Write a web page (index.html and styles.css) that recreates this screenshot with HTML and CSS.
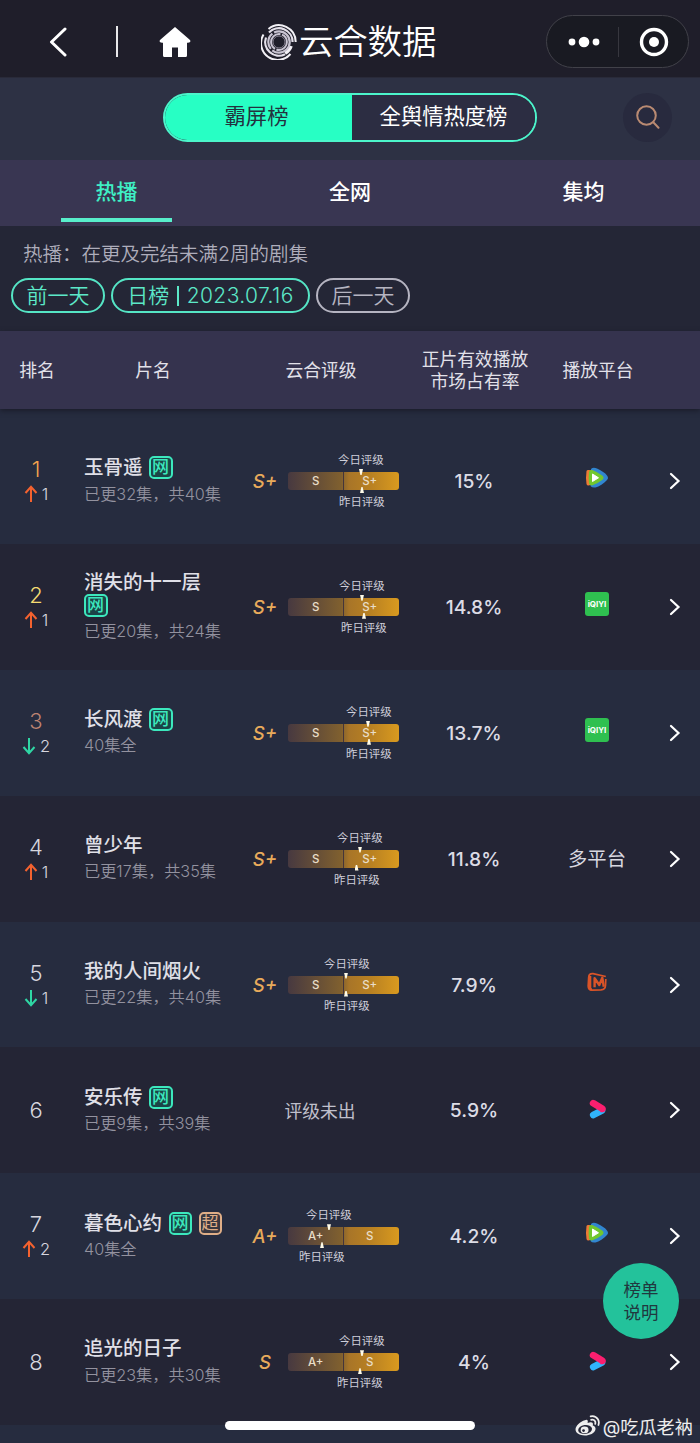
FILE: index.html
```html
<!DOCTYPE html>
<html lang="zh-CN">
<head>
<meta charset="utf-8">
<title>云合数据</title>
<link rel="stylesheet" href="styles.css">
</head>
<body>
<svg class="sprite" aria-hidden="true">
  <symbol id="up" viewBox="0 0 14 18"><path d="M7 17V2M1.500 8L7 1.800L12.500 8" fill="none" stroke="#f4622f" stroke-width="2"/></symbol>
  <symbol id="down" viewBox="0 0 14 18"><path d="M7 1v15M1.500 10L7 16.200L12.500 10" fill="none" stroke="#2fd6a4" stroke-width="2"/></symbol>
  <symbol id="chevron" viewBox="0 0 12 18"><path d="M2 2l7.500 7L2 16" fill="none" stroke="#fff" stroke-width="2.200" stroke-linecap="round"/></symbol>
  <symbol id="tencent" viewBox="0 0 24 22">
    <path d="M6 2C8 .2 10 .8 12 1.600C17 4 20 6 22 8.500Q24 11 22 13C19 16.500 14 19.500 10.500 20.500Q7 21 5.500 19Z" fill="#3186d0"/>
    <path d="M1.500 4Q2 2.500 4 3L9 4V17L3.500 18.500Q1.800 18.500 1.500 17Q.5 11 1.500 4Z" fill="#ef7a35"/>
    <path d="M4 5Q4.500 2.500 7 3Q13 5 17.500 8.800Q19.500 11 17.500 12.700Q12 17 7 18.500Q4.500 18.500 4 16.500Q3.200 11 4 5Z" fill="#72c72e"/>
    <path d="M7.500 7L13.500 10.800L7.500 14.500Z" fill="#fff" stroke="#fff" stroke-linejoin="round"/>
  </symbol>
  <symbol id="mango" viewBox="0 0 20 20">
    <path d="M18.800 4.500L6 1.600Q2 1.300 1.700 5L1.200 14Q1.200 18.200 5 18.200L14 17.800Q18.300 17.500 18.500 13.500L18.800 7" fill="none" stroke="#d95428" stroke-width="1.700"/>
    <path d="M3 4V16Q3 17.500 5 17.500" fill="none" stroke="#d95428" stroke-width="2.600"/>
    <path d="M7.600 15.200V6.200L12.300 13L15.300 5.800L16.800 14.800" fill="none" stroke="#d95428" stroke-width="2.400" stroke-linejoin="round"/>
  </symbol>
  <symbol id="youku" viewBox="0 0 18 20">
    <path d="M4.200 16L13 11.500" stroke="#31b4fb" stroke-width="6.600" stroke-linecap="round"/>
    <path d="M4.200 4.200L13.200 9.700" stroke="#fb1f6f" stroke-width="6.800" stroke-linecap="round"/>
    <path d="M11 13Q16.800 14 16.600 9.500L13 9Z" fill="#fb1f6f"/>
  </symbol>
</svg>

<div class="screen">
  <header class="nav">
    <svg class="nav-back" viewBox="0 0 18 30"><path d="M16 2L2.500 15L16 28" fill="none" stroke="#fff" stroke-width="3" stroke-linecap="round" stroke-linejoin="round"/></svg>
    <span class="nav-line"></span>
    <svg class="nav-home" viewBox="0 0 32 30"><path d="M16 0L31 13Q32.500 15.500 29 15.800H28V28.500Q28 30 26.500 30H19V20.500H13V30H5.500Q4 30 4 28.500V15.800H3Q-.5 15.500 1 13Z" fill="#fff"/></svg>
    <div class="brand">
      <svg class="brand-logo" viewBox="0 0 36 36" fill="none">
        <g stroke="#f3f1f6" stroke-width="2">
          <path d="M7.500 5A16.700 16.700 0 0 1 34.700 18"/>
          <path d="M2.500 10.500A16.700 16.700 0 0 0 29.500 30"/>
        </g>
        <path d="M8 8.600A13.600 13.600 0 0 1 31.600 18" stroke="#e4e0ea" stroke-width="2.200"/>
        <path d="M5 13.500A13.700 13.700 0 0 0 24 30.300" stroke="#e4e0ea" stroke-width="2.200"/>
        <path d="M30 22A12.600 12.600 0 0 1 24 29.200" stroke="#f3f1f6" stroke-width="3.600"/>
        <g stroke="#c9c4d2">
          <circle cx="18" cy="18" r="10.700" stroke-width="2.200" stroke-dasharray="24 2 17 2"/>
          <circle cx="18" cy="18" r="7.900" stroke-width="2" stroke-dasharray="15 1.500 22 1.500"/>
        </g>
        <circle cx="18" cy="18" r="6" stroke="#85808f" stroke-width="1"/>
      </svg>
      <span>云合数据</span>
    </div>
    <div class="capsule">
      <svg class="dots" viewBox="0 0 32 12" fill="#fff"><circle cx="4" cy="6" r="3.400"/><circle cx="16" cy="6" r="5.300"/><circle cx="28" cy="6" r="3.400"/></svg>
      <span class="capsule-line"></span>
      <svg class="target" viewBox="0 0 30 30"><circle cx="15" cy="15" r="12.500" fill="none" stroke="#fff" stroke-width="3.400"/><circle cx="15" cy="15" r="5" fill="#fff"/></svg>
    </div>
  </header>

  <div class="switch-bar">
    <div class="switch"><span class="switch-on">霸屏榜</span><span class="switch-off">全舆情热度榜</span></div>
    <div class="search"><svg viewBox="0 0 24 24" fill="none" stroke="#b98a72" stroke-width="2" stroke-linecap="round"><circle cx="10.500" cy="10.500" r="9.300"/><path d="M17.300 17.300L22.500 22.700"/></svg></div>
  </div>

  <nav class="tabs"><span class="tab tab-on">热播</span><span class="tab">全网</span><span class="tab">集均</span></nav>

  <section class="filters">
    <p class="note">热播：在更及完结未满2周的剧集</p>
    <div class="pills">
      <span class="pill pill-day">前一天</span>
      <span class="pill pill-date">日榜<i class="pill-sep"></i><span class="date">2023.07.16</span></span>
      <span class="pill pill-day pill-off">后一天</span>
    </div>
  </section>

  <div class="cols head"><span>排名</span><span>片名</span><span>云合评级</span><span>正片有效播放<br>市场占有率</span><span>播放平台</span></div>

  <main class="list">
    <article class="cols row">
      <div class="rank"><b class="r1">1</b><span class="move"><svg><use href="#up"/></svg>1</span></div>
      <div class="name"><div class="title">玉骨遥<i class="tag">网</i></div><div class="sub">已更32集，共40集</div></div>
      <div class="rating"><em>S+</em><div class="scale"><span class="mark-label" style="margin-left:50px">今日评级</span><div class="bar"><span>S</span><span>S+</span><i class="pin pin-top" style="left:73px"></i><i class="pin pin-bottom" style="left:74px"></i></div><span class="mark-label" style="margin-left:51px">昨日评级</span></div></div>
      <div class="share">15%</div>
      <div class="platform"><svg class="p-tencent"><use href="#tencent"/></svg></div>
      <svg class="go"><use href="#chevron"/></svg>
    </article>
    <article class="cols row">
      <div class="rank"><b class="r2">2</b><span class="move"><svg><use href="#up"/></svg>1</span></div>
      <div class="name"><div class="title">消失的十一层<i class="tag">网</i></div><div class="sub">已更20集，共24集</div></div>
      <div class="rating"><em>S+</em><div class="scale"><span class="mark-label" style="margin-left:51px">今日评级</span><div class="bar"><span>S</span><span>S+</span><i class="pin pin-top" style="left:74px"></i><i class="pin pin-bottom" style="left:76px"></i></div><span class="mark-label" style="margin-left:53px">昨日评级</span></div></div>
      <div class="share">14.8%</div>
      <div class="platform"><span class="p-iqiyi">iQIYI</span></div>
      <svg class="go"><use href="#chevron"/></svg>
    </article>
    <article class="cols row">
      <div class="rank"><b class="r3">3</b><span class="move"><svg><use href="#down"/></svg>2</span></div>
      <div class="name"><div class="title">长风渡<i class="tag">网</i></div><div class="sub">40集全</div></div>
      <div class="rating"><em>S+</em><div class="scale"><span class="mark-label" style="margin-left:58px">今日评级</span><div class="bar"><span>S</span><span>S+</span><i class="pin pin-top" style="left:80px"></i><i class="pin pin-bottom" style="left:81px"></i></div><span class="mark-label" style="margin-left:58px">昨日评级</span></div></div>
      <div class="share">13.7%</div>
      <div class="platform"><span class="p-iqiyi">iQIYI</span></div>
      <svg class="go"><use href="#chevron"/></svg>
    </article>
    <article class="cols row">
      <div class="rank"><b>4</b><span class="move"><svg><use href="#up"/></svg>1</span></div>
      <div class="name"><div class="title">曾少年</div><div class="sub">已更17集，共35集</div></div>
      <div class="rating"><em>S+</em><div class="scale"><span class="mark-label" style="margin-left:49px">今日评级</span><div class="bar"><span>S</span><span>S+</span><i class="pin pin-top" style="left:72px"></i><i class="pin pin-bottom" style="left:68.500px"></i></div><span class="mark-label" style="margin-left:46px">昨日评级</span></div></div>
      <div class="share">11.8%</div>
      <div class="platform">多平台</div>
      <svg class="go"><use href="#chevron"/></svg>
    </article>
    <article class="cols row">
      <div class="rank"><b>5</b><span class="move"><svg><use href="#down"/></svg>1</span></div>
      <div class="name"><div class="title">我的人间烟火</div><div class="sub">已更22集，共40集</div></div>
      <div class="rating"><em>S+</em><div class="scale"><span class="mark-label" style="margin-left:36px">今日评级</span><div class="bar"><span>S</span><span>S+</span><i class="pin pin-top" style="left:58px"></i><i class="pin pin-bottom" style="left:58px"></i></div><span class="mark-label" style="margin-left:36px">昨日评级</span></div></div>
      <div class="share">7.9%</div>
      <div class="platform"><svg class="p-mango"><use href="#mango"/></svg></div>
      <svg class="go"><use href="#chevron"/></svg>
    </article>
    <article class="cols row">
      <div class="rank"><b>6</b></div>
      <div class="name"><div class="title">安乐传<i class="tag">网</i></div><div class="sub">已更9集，共39集</div></div>
      <div class="pending">评级未出</div>
      <div class="share">5.9%</div>
      <div class="platform"><svg class="p-youku"><use href="#youku"/></svg></div>
      <svg class="go"><use href="#chevron"/></svg>
    </article>
    <article class="cols row">
      <div class="rank"><b>7</b><span class="move"><svg><use href="#up"/></svg>2</span></div>
      <div class="name"><div class="title">暮色心约<i class="tag">网</i><i class="tag tag-super">超</i></div><div class="sub">40集全</div></div>
      <div class="rating"><em>A+</em><div class="scale"><span class="mark-label" style="margin-left:18px">今日评级</span><div class="bar"><span>A+</span><span>S</span><i class="pin pin-top" style="left:41px"></i><i class="pin pin-bottom" style="left:34px"></i></div><span class="mark-label" style="margin-left:11px">昨日评级</span></div></div>
      <div class="share">4.2%</div>
      <div class="platform"><svg class="p-tencent"><use href="#tencent"/></svg></div>
      <svg class="go"><use href="#chevron"/></svg>
    </article>
    <article class="cols row">
      <div class="rank"><b>8</b></div>
      <div class="name"><div class="title">追光的日子</div><div class="sub">已更23集，共30集</div></div>
      <div class="rating"><em>S</em><div class="scale"><span class="mark-label" style="margin-left:51px">今日评级</span><div class="bar"><span>A+</span><span>S</span><i class="pin pin-top" style="left:74px"></i><i class="pin pin-bottom" style="left:72px"></i></div><span class="mark-label" style="margin-left:49px">昨日评级</span></div></div>
      <div class="share">4%</div>
      <div class="platform"><svg class="p-youku"><use href="#youku"/></svg></div>
      <svg class="go"><use href="#chevron"/></svg>
    </article>
  </main>

  <div class="float-btn">榜单<br>说明</div>
  <div class="home-bar"></div>
  <div class="credit">
    <svg viewBox="0 0 24 20" fill="none">
      <path d="M9.500 5Q12 3.800 12.300 6Q12.300 7 12 7.600Q16 6 17 7.700Q17.500 9 17 10Q20 11 19.700 13.500C19 17.500 14 19.500 9.500 19.500C4.500 19.500.5 17.200.5 13.800C.5 10.500 5 6 9.500 5Z" fill="#eee"/>
      <ellipse cx="9.700" cy="13.800" rx="6.700" ry="4.300" fill="#242637" transform="rotate(-8 9.700 13.800)"/>
      <ellipse cx="9.200" cy="14.200" rx="3.800" ry="3.300" fill="#eee"/><circle cx="8.200" cy="14.900" r="1.300" fill="#242637"/>
      <path d="M15 1.200Q19.500.2 22 4Q23.500 6.500 22.500 9.500M15.500 4.600Q18 4 19.300 6Q19.800 7.200 19.400 8.500" stroke="#eee" stroke-width="1.700" stroke-linecap="round"/>
    </svg>
    <span>@吃瓜老衲</span>
  </div>
</div>
</body>
</html>
```
FILE: styles.css
```css
* { box-sizing: border-box; }
body {
  margin: 0;
  background: #262c3f;
  color: #fff;
  font-family: Inter, "Noto Sans CJK SC", sans-serif;
}
i, em, b { font-style: normal; font-weight: inherit; }
.sprite { position: absolute; width: 0; height: 0; }
.screen { position: relative; width: 700px; height: 1443px; overflow: hidden; background: #262c3f; }

/* Navigation */
.nav { display: flex; align-items: center; height: 78px; padding: 6px 11px 0 49px; background: #1f1e2a; border-bottom: 1px solid #292a39; }
.nav-back { width: 18px; height: 30px; }
.nav-line { width: 1.500px; height: 31px; margin-left: 49px; background: #e8e8ea; }
.nav-home { width: 32px; height: 30px; margin-left: 41.500px; }
.brand { display: flex; align-items: center; gap: 2px; margin-left: 70px; font-size: 34.500px; font-weight: 350; line-height: 44px; letter-spacing: -.2px; }
.brand-logo { width: 36px; height: 36px; }
.capsule { display: flex; align-items: center; width: 143px; height: 53px; margin-left: auto; padding-left: 21px; border: 1px solid #414149; border-radius: 27px; background: #191a22; }
.dots { width: 32px; height: 12px; }
.capsule-line { width: 1px; height: 30px; margin-left: 18px; background: #37373f; }
.target { width: 30px; height: 30px; margin-left: 20px; }

/* Board switch */
.switch-bar { display: flex; align-items: center; height: 82px; padding: 0 28px 4px 163px; background: #2d3144; }
.switch { display: flex; width: 374px; height: 49px; border: 2px solid #4cf5cb; border-radius: 25px; overflow: hidden; font-size: 21.300px; line-height: 42px; text-align: center; }
.switch-on { width: 187px; padding-right: 4px; background: #27ffc4; color: #23323f; }
.switch-off { flex: 1; background: #2c2d42; }
.search { display: flex; align-items: center; justify-content: center; width: 49px; height: 49px; margin-left: auto; border-radius: 50%; background: #282a3e; }
.search svg { width: 24px; height: 24px; }

/* Tabs */
.tabs { display: flex; justify-content: space-between; height: 66px; padding: 0 61px; background: #393652; }
.tab { width: 111px; height: 62px; font-size: 21px; font-weight: 500; line-height: 64px; text-align: center; }
.tab-on { border-bottom: 4px solid #58eecb; color: #3ff0c5; }

/* Date filter */
.filters { height: 105px; padding: 14px 11px 0; background: #242636; }
.note { height: 28px; margin: 0 0 10px 12px; color: #aeadbb; font-size: 19.500px; font-weight: 350; line-height: 28px; }
.pills { display: flex; gap: 6px; }
.pill { display: flex; align-items: center; justify-content: center; height: 35px; border: 2px solid #55e5c5; border-radius: 18px; color: #5ce8c8; font-size: 21px; font-weight: 350; line-height: 30px; }
.pill-day { width: 94px; }
.pill-date { width: 199px; }
.pill-sep { width: 1.500px; height: 20px; margin: 0 8px; background: currentColor; }
.date { letter-spacing: .4px; }
.pill-off { border-color: #b5b4c1; color: #b5b4c1; }

/* Ranking table */
.cols { display: grid; grid-template-columns: 72px 160px 176px 132px 114px 42px; align-items: center; }
.head { position: relative; height: 78px; padding: 1px 0 0 1px; background: #35334e; box-shadow: 0 2px 5px #1b1d2b; color: #e2e1e9; font-size: 17.800px; line-height: 21.500px; text-align: center; }
.list { padding-top: 9px; }
.row { height: 125.900px; background: #262c3f; }
.row:nth-child(even) { background: #242535; }
.rank { display: flex; flex-direction: column; align-items: center; color: #d7d7df; }
.rank b { font-size: 22px; font-weight: 350; line-height: 26px; }
.rank .r1 { color: #f3a24d; }
.rank .r2 { color: #f5dc72; }
.rank .r3 { color: #bd8371; }
.move { display: flex; align-items: center; gap: 4px; height: 24px; font-size: 16.500px; font-weight: 350; }
.move svg { width: 14px; height: 18px; }
.name { width: 152px; padding-left: 12px; }
.title { display: flex; flex-wrap: wrap; align-items: center; column-gap: 6.500px; margin-bottom: 2px; color: #e0e0e8; font-size: 19.500px; font-weight: 500; line-height: 23.500px; }
.tag { width: 23.500px; height: 23px; border: 2px solid #3ce8bd; border-radius: 5px; background: #1b4448; color: #3ce8bd; font-size: 17px; font-weight: 500; line-height: 18px; text-align: center; text-indent: -.5px; }
.tag-super { border-color: #dfae87; background: #3a3840; color: #dfae87; font-weight: 400; }
.sub { color: #93929f; font-size: 16.200px; font-weight: 350; line-height: 24px; white-space: nowrap; }
.rating { display: flex; align-items: center; padding-left: 13px; }
.rating em { width: 40px; margin-right: 3px; color: #e9ab5b; font-size: 18.500px; font-style: italic; font-weight: 500; text-align: center; }
.scale { width: 111px; }
.mark-label { display: block; width: 46px; color: #cfcfda; font-size: 11.400px; line-height: 24px; white-space: nowrap; }
.bar { position: relative; display: grid; grid-template-columns: 1fr 1fr; height: 18px; border-radius: 3px; background: linear-gradient(90deg, #473940, #80602f 48%, #a87528 55%, #b98122 75%, #d99a1f); color: #e9ddc8; font-size: 11.500px; font-weight: 500; line-height: 18px; text-align: center; }
.bar span { padding-left: 1px; }
.bar span:nth-child(2) { padding: 0 3px 0 0; }
.bar span:first-child { border-right: 1px solid #44353a; }
.pin { position: absolute; width: 4px; height: 6px; margin-left: -2px; background: #fffbe8; }
.pin-top { top: -3px; clip-path: polygon(0 0, 100% 0, 65% 100%, 35% 100%); }
.pin-bottom { bottom: -3px; clip-path: polygon(35% 0, 65% 0, 100% 100%, 0 100%); }
.pending { color: #c0c0cc; font-size: 17.800px; text-align: center; }
.share { color: #dcdce5; font-size: 19.300px; font-weight: 500; text-align: center; }
.platform { display: flex; justify-content: center; color: #d8d8e0; font-size: 19.300px; line-height: 24px; }
.p-tencent { width: 24px; height: 22px; margin-bottom: 6px; }
.p-iqiyi { width: 24px; height: 24px; margin-bottom: 5px; border-radius: 3px; background: #2fc050; color: #fff; font-size: 8px; font-weight: 700; line-height: 24px; text-align: center; }
.p-mango { width: 20px; height: 20px; margin-bottom: 5px; }
.p-youku { width: 18px; height: 20px; margin: 0 0 3px 2px; }
.go { justify-self: center; width: 12px; height: 18px; }

/* Overlays */
.float-btn { position: absolute; left: 603px; top: 1263px; width: 76px; height: 76px; padding-top: 15px; border-radius: 50%; background: #23c29b; color: #20383f; font-size: 17.500px; line-height: 23px; text-align: center; }
.home-bar { position: absolute; left: 225px; top: 1421px; width: 250px; height: 9px; border-radius: 5px; background: #fff; }
.credit { position: absolute; right: 7px; top: 1414px; display: flex; align-items: center; gap: 3px; color: #eee; font-size: 18.200px; line-height: 26px; }
.credit svg { width: 25px; height: 21px; margin-bottom: 3px; }
```
